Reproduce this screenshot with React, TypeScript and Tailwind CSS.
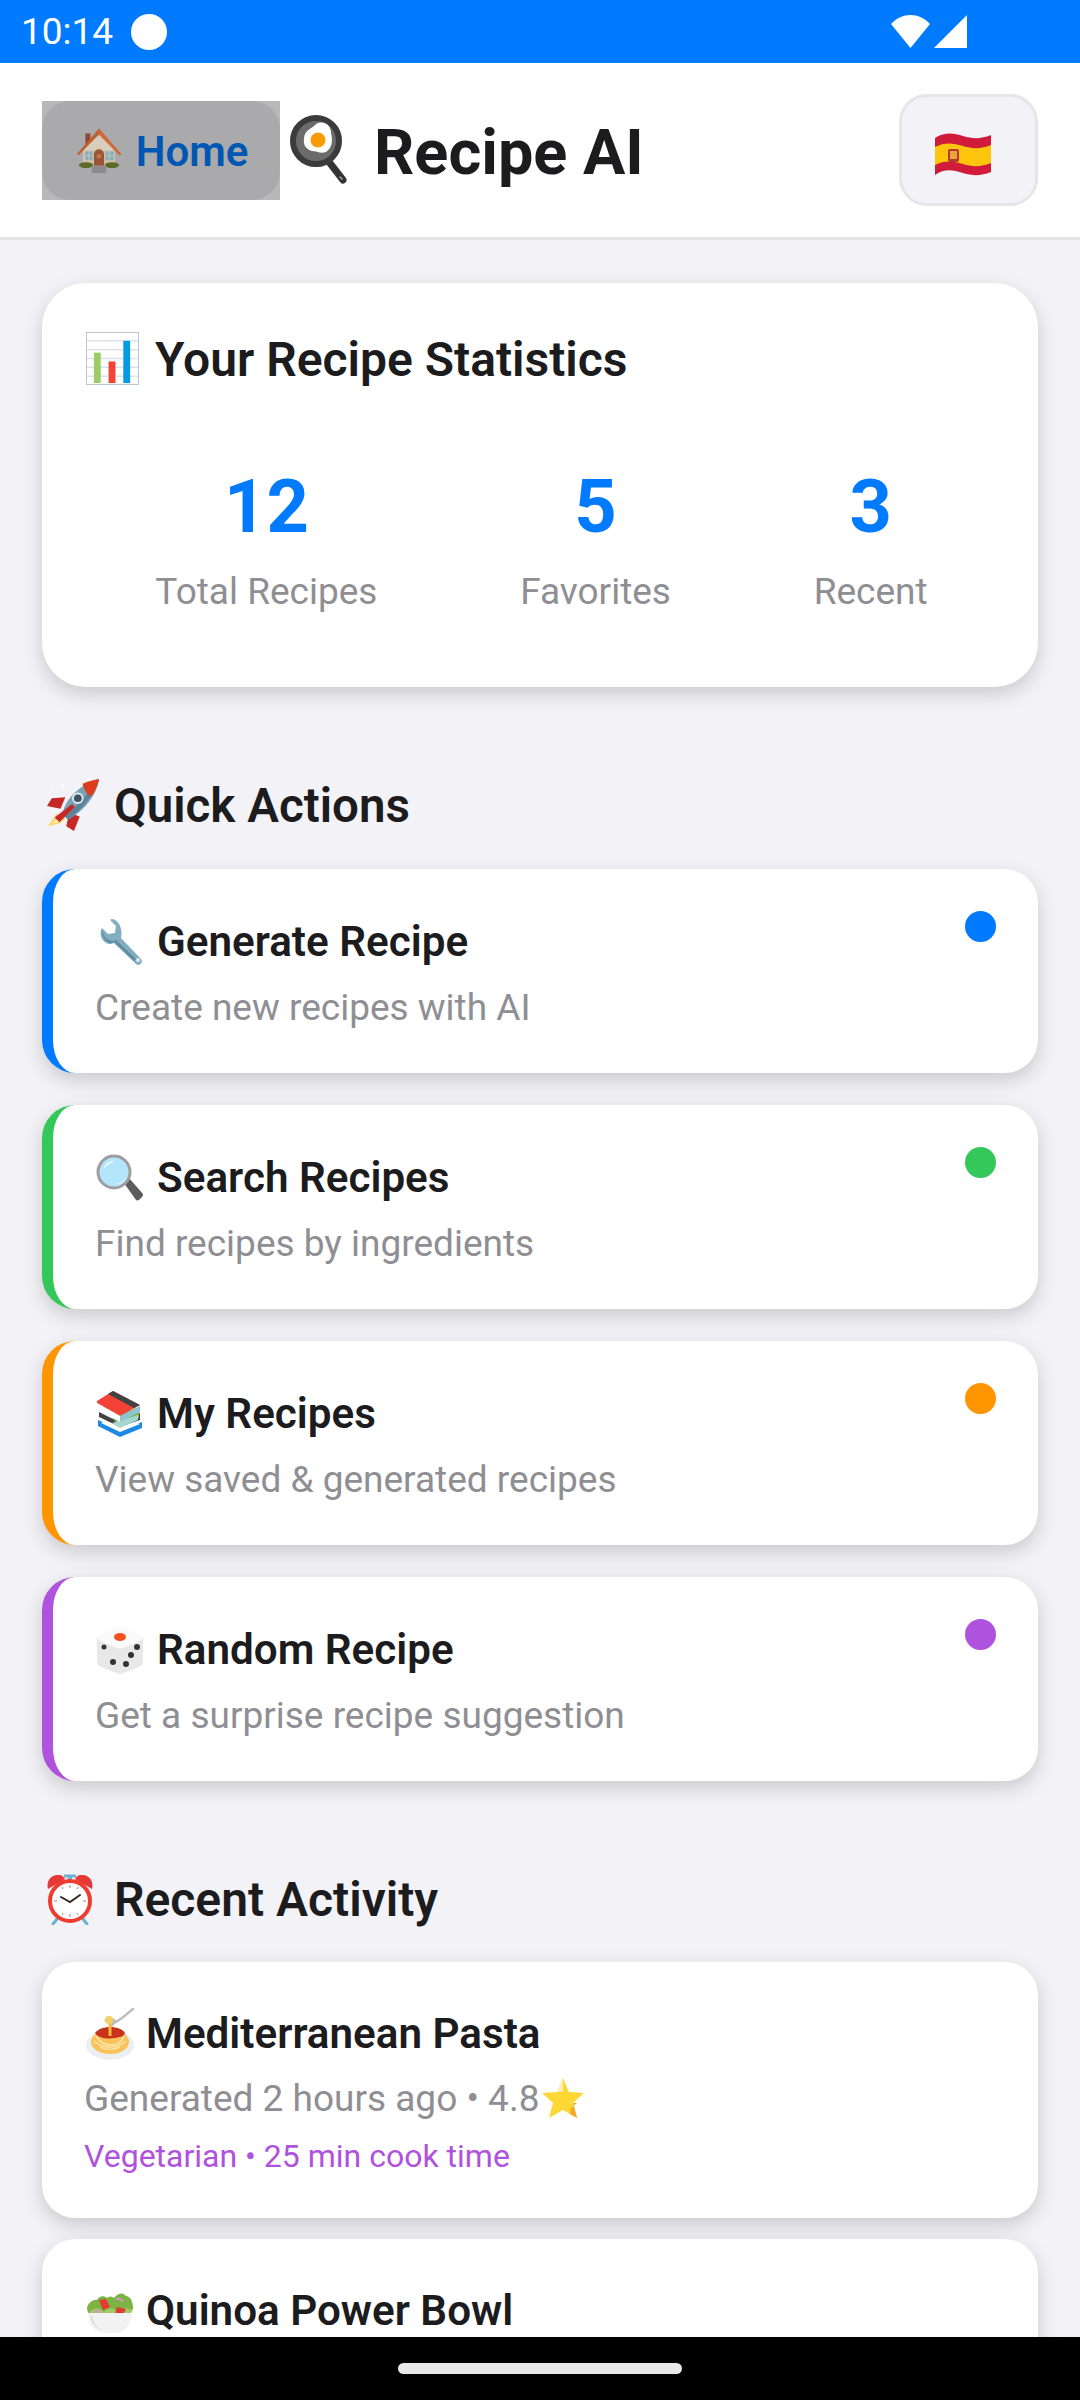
import type { ReactNode } from "react";

type IconProps = { className?: string };

function Glyph({ className, box = "0 0 64 64", children }: IconProps & { box?: string; children: ReactNode }) {
  return (
    <svg viewBox={box} className={`shrink-0 ${className ?? ""}`} aria-hidden="true">
      {children}
    </svg>
  );
}

function HouseIcon({ className }: IconProps) {
  return (
    <Glyph className={className}>
      <rect x="13" y="9" width="7" height="17" fill="#8a4b32" />
      <path d="M10 30 32 11l22 19v26H10z" fill="#d8cdbb" />
      <path d="M1 38 32 2l31 36-3 1L32 10 4 39z" fill="#bf5f30" />
      <path d="M32 2l31 36-3 1L32 10z" fill="#d06a38" />
      <rect x="11" y="33" width="43" height="21" fill="#cbbfac" />
      <path d="M25 54V38a7 7 0 0 1 14 0v16z" fill="#9a5536" />
      <rect x="29" y="38" width="6" height="5" fill="#c17a4e" />
      <rect x="13" y="34" width="10" height="12" fill="#8aaebb" />
      <rect x="41" y="34" width="11" height="12" fill="#8aaebb" />
      <path d="M18 34v12M13 40h10M46 34v12M41 40h11" stroke="#d8cdbb" strokeWidth="1" />
      <ellipse cx="14" cy="53" rx="10" ry="4" fill="#5c6b2a" />
      <ellipse cx="50" cy="53" rx="10" ry="4" fill="#5c6b2a" />
      <rect x="22" y="54" width="20" height="10" fill="#8c8c8c" />
    </Glyph>
  );
}

function PanIcon({ className }: IconProps) {
  return (
    <Glyph box="0 0 58 70" className={className}>
      <path d="M36 43l17 22" stroke="#333" strokeWidth="7" strokeLinecap="round" />
      <path d="M50 62l2 2" stroke="#aaa" strokeWidth="1.5" strokeLinecap="round" />
      <circle cx="26" cy="26" r="23" fill="#6b6b6b" stroke="#3b3b3b" strokeWidth="6" />
      <path d="M14 24c0-9 8-10 12-15 8-4 15 1 15 9 2 8 1 15-5 19-6 2-9-1-14-1-6-2-9-6-8-12z" fill="#fff" />
      <circle cx="28" cy="25" r="7.5" fill="#fb9a02" />
    </Glyph>
  );
}

function FlagIcon({ className }: IconProps) {
  return (
    <Glyph box="0 0 56 44" className={className}>
      <path d="M0 6c10-6 18-5 28-2s18 3 28-1v37c-10 4-18 4-28 1S10 36 0 43z" fill="#d01c3a" />
      <path d="M0 15c10-5 18-4 28-1s18 3 28-1v18c-10 4-18 4-28 1S10 28 0 33z" fill="#fdc50c" />
      <rect x="13" y="17" width="11" height="13" rx="2" fill="#b5392f" />
      <rect x="15" y="19" width="7" height="8" fill="#e8a33a" />
    </Glyph>
  );
}

function ChartIcon({ className }: IconProps) {
  return (
    <Glyph box="0 0 54 54" className={className}>
      <rect x="0.5" y="0.5" width="53" height="53" fill="#fff" stroke="#b8c8d4" />
      <path d="M1 9h52M1 18h52M1 27h52M1 36h52M1 45h52" stroke="#dbe4ea" strokeWidth="1.5" />
      <rect x="8" y="21" width="7" height="31" fill="#9ccc65" />
      <rect x="23" y="30" width="7" height="22" fill="#f44336" />
      <rect x="38" y="9" width="7" height="43" fill="#039be5" />
    </Glyph>
  );
}

function RocketIcon({ className }: IconProps) {
  return (
    <Glyph box="0 0 56 56" className={className}>
      <path d="M11 37 2 50l13-3 5-5z" fill="#fbd866" />
      <path d="M14 40 7 47l9-2z" fill="#fff3c4" />
      <path d="M20 20 6 21l-5 8 14 3z" fill="#c62828" />
      <path d="M24 36l-3 14 8 5 6-15z" fill="#c62828" />
      <path d="M17 38C19 24 32 8 55 1c-3 20-19 35-32 42z" fill="#78a3b8" />
      <path d="M55 1c-4 16-19 33-32 42l-3-3C32 30 44 15 55 1z" fill="#5b8498" />
      <path d="M38 6c6-3 12-4 17-5-1 6-4 13-8 18-4-1-8-7-9-13z" fill="#dd3d1c" />
      <circle cx="33" cy="21" r="6" fill="#dfe8ed" />
      <circle cx="33" cy="21" r="4" fill="#3d5364" />
      <path d="M9 41 27 27l3 3-16 16z" fill="#c62828" />
      <circle cx="17" cy="8" r="1.5" fill="#fff" />
      <circle cx="5" cy="12" r="1" fill="#fff" />
    </Glyph>
  );
}

function WrenchIcon({ className }: IconProps) {
  return (
    <Glyph box="0 0 48 48" className={className}>
      <path d="M16 1c-1 0-2 1-1 2l5 5-1 7-7 1-5-5c-1-1-2 0-2 1-2 7 3 14 10 14l3-1 22 21c3 3 8-2 5-5L25 20c2-9-2-18-9-19z" fill="#82aec0" />
      <path d="M7 12c0 7 5 11 10 11l3-1 20 19-2 2-20-19-3 1C9 25 5 18 7 12z" fill="#5f8ea3" />
      <circle cx="42" cy="42" r="2" fill="#dfeaf0" />
    </Glyph>
  );
}

function SearchIcon({ className }: IconProps) {
  return (
    <Glyph box="0 0 48 48" className={className}>
      <path d="M28 29l5-5 14 16c1 2-5 8-7 6z" fill="#5c5c5c" />
      <circle cx="18" cy="18" r="16" fill="#b3e5fc" stroke="#9e9e9e" strokeWidth="3" />
      <path d="M7 16c1-6 6-10 12-9-5 2-9 5-12 9z" fill="#e6f7ff" />
      <path d="M20 30c5-1 8-3 10-7-1 5-5 8-10 7z" fill="#e6f7ff" />
    </Glyph>
  );
}

function BooksIcon({ className }: IconProps) {
  return (
    <Glyph box="0 0 48 48" className={className}>
      <path d="M2 36 24 47l22-9v-6L24 40 2 30z" fill="#1e88e5" />
      <path d="M5 33 24 42l20-8-20-8z" fill="#fff" />
      <path d="M3 22l20 10 21-9v7L24 37 3 27z" fill="#424242" />
      <path d="M16 28l24-10 3 4v6l-19 8z" fill="#7cb342" />
      <path d="M16 33l26-8v5L24 38z" fill="#a5d6d0" />
      <path d="M1 11 17 1l27 14-20 11L1 15z" fill="#f44336" />
      <path d="M17 1l27 14-6 3L12 4z" fill="#424242" />
      <path d="M1 13l23 13 20-10v6L24 32 1 19z" fill="#8ec3d0" />
      <path d="M1 13l23 13v6L1 19z" fill="#fff" />
    </Glyph>
  );
}

function DieIcon({ className }: IconProps) {
  return (
    <Glyph box="0 0 46 48" className={className}>
      <path d="M23 1 43 9c3 2 3 4 3 7v18c0 4-1 5-4 7l-15 6c-3 1-5 1-8 0L4 41c-3-2-4-3-4-7V16c0-3 0-5 3-7z" fill="#e8e8e8" />
      <path d="M23 1 43 9c3 2 2 5 0 6L26 22c-2 1-4 1-6 0L3 15c-2-1-3-4 0-6z" fill="#fafafa" />
      <ellipse cx="23" cy="11" rx="6" ry="4" fill="#f4511e" />
      <circle cx="7" cy="21" r="2.5" fill="#333" />
      <circle cx="16" cy="36" r="3" fill="#333" />
      <circle cx="40" cy="21" r="3" fill="#333" />
      <circle cx="34" cy="29" r="3" fill="#333" />
      <circle cx="29" cy="38" r="3" fill="#333" />
    </Glyph>
  );
}

function ClockIcon({ className }: IconProps) {
  return (
    <Glyph box="0 0 48 52" className={className}>
      <path d="M11 46l-4 5M37 46l4 5" stroke="#6fb1cf" strokeWidth="3" strokeLinecap="round" />
      <path d="M24 3v6" stroke="#6fb1cf" strokeWidth="4" />
      <path d="M18 3h12" stroke="#6fb1cf" strokeWidth="3" />
      <path d="M2 16C0 8 5 1 13 2c3 0 5 2 6 4z" fill="#e53935" />
      <path d="M46 16c2-8-3-15-11-14-3 0-5 2-6 4z" fill="#e53935" />
      <circle cx="24" cy="28" r="20" fill="#fff" stroke="#ef3b30" strokeWidth="4" />
      <path d="M24 12v3M24 41v3M8 28h3M37 28h3M16 14l1 2M32 14l-1 2M16 42l1-2M32 42l-1-2" stroke="#a1887f" strokeWidth="1" />
      <path d="M15 24l9 5 10-7" fill="none" stroke="#3e2723" strokeWidth="2" strokeLinecap="round" />
    </Glyph>
  );
}

function PastaIcon({ className }: IconProps) {
  return (
    <Glyph box="0 0 48 52" className={className}>
      <path d="M25 16C33 14 38 8 47 1" stroke="#bdbdbd" strokeWidth="2.5" fill="none" strokeLinecap="round" />
      <path d="M18 12l6-4 7 5-5 6z" fill="#bdbdbd" />
      <ellipse cx="24" cy="37" rx="24" ry="15" fill="#eceff1" />
      <ellipse cx="24" cy="34" rx="19" ry="12" fill="#fbc15b" />
      <path d="M8 33c8 7 22 9 32 0M10 28c7 12 24 12 28 0M14 39c6 3 14 3 20 0" stroke="#fde5a8" strokeWidth="1.5" fill="none" />
      <path d="M9 25c3-4 9-6 15-6s13 2 15 6c-1 4-6 4-10 5-6 1-16 1-20-5z" fill="#c8321c" />
      <path d="M24 12v16" stroke="#f4bc3f" strokeWidth="3" />
      <circle cx="23" cy="12" r="4" fill="#f4d066" />
    </Glyph>
  );
}

function StarIcon({ className }: IconProps) {
  return (
    <Glyph box="0 0 44 44" className={className}>
      <path d="M22 1l6 14 15 1-11 10 4 15-14-8-14 8 4-15L1 16l15-1z" fill="#fdd835" />
      <path d="M22 1v14l-6 0z" fill="#ffecb3" />
      <path d="M32 26l4 15-7-4 1-6 6-5z" fill="#f9a825" />
    </Glyph>
  );
}

function SaladIcon({ className }: IconProps) {
  return (
    <Glyph box="0 0 48 46" className={className}>
      <path d="M1 20c1-5 6-9 10-8 2-4 7-5 10-2 3-2 5-2 7 0 4-5 9-6 12-2 4 0 7 5 7 12-1 5-5 9-9 9H10c-5 0-9-4-9-9z" fill="#7cb342" />
      <path d="M3 24c7-6 11-4 15 0 5-5 9-5 13 0 5-4 10-5 15-2l-4 8H8z" fill="#9ccc65" />
      <path d="M13 12l7-1 4 8-7 3z" fill="#e53935" />
      <path d="M31 19l9 2-4 7-7-2z" fill="#e53935" />
      <path d="M8 24c4-2 8 0 9 3M30 11c3-1 6 1 7 3" stroke="#d59ac4" strokeWidth="2" fill="none" />
      <path d="M2 25h44c0 11-7 19-15 20H17C9 44 2 36 2 25z" fill="#f2f2f2" />
      <path d="M6 28c1 7 5 12 11 14-7-1-12-7-13-14z" fill="#dcdcdc" />
    </Glyph>
  );
}

const stats = [
  { value: "12", label: "Total Recipes" },
  { value: "5", label: "Favorites" },
  { value: "3", label: "Recent" },
];

const actions = [
  {
    title: "Generate Recipe",
    desc: "Create new recipes with AI",
    icon: WrenchIcon,
    border: "border-l-[#007aff]",
    dot: "bg-[#007aff]",
  },
  {
    title: "Search Recipes",
    desc: "Find recipes by ingredients",
    icon: SearchIcon,
    border: "border-l-[#34c759]",
    dot: "bg-[#34c759]",
  },
  {
    title: "My Recipes",
    desc: "View saved & generated recipes",
    icon: BooksIcon,
    border: "border-l-[#ff9500]",
    dot: "bg-[#ff9500]",
  },
  {
    title: "Random Recipe",
    desc: "Get a surprise recipe suggestion",
    icon: DieIcon,
    border: "border-l-[#af52de]",
    dot: "bg-[#af52de]",
  },
];

const cardShadow = "shadow-[0_7px_20px_rgba(0,0,0,0.17)]";

export default function App() {
  return (
    <div className="flex h-[2400px] w-[1080px] flex-col overflow-hidden bg-[#f2f2f7] font-['Roboto',sans-serif] text-[#1c1c1e]">
      {/* status bar */}
      <div className="flex h-[63px] shrink-0 items-center justify-between bg-[#007aff] pl-[21px] pr-[113px] text-white">
        <div className="flex items-center gap-[18px]">
          <span className="text-[37px] leading-none">10:14</span>
          <span className="h-[36px] w-[36px] rounded-full bg-white" />
        </div>
        <div className="flex items-center gap-[4px]">
          <svg viewBox="0 0 39 33" className="h-[33px] w-[39px]" aria-hidden="true">
            <path d="M0 9C11-3 28-3 39 9L19.500 33z" fill="#fff" />
          </svg>
          <svg viewBox="0 0 33 33" className="h-[33px] w-[33px]" aria-hidden="true">
            <path d="M33 0v33H0z" fill="#fff" />
          </svg>
        </div>
      </div>

      {/* header */}
      <header className="flex h-[177px] shrink-0 items-center justify-between border-b-[3px] border-[#e5e5ea] bg-white px-[42px]">
        <div className="flex items-center">
          <div className="h-[99px] w-[238px] bg-[#b8b8b8]">
            <div className="flex h-full items-center justify-center gap-[14px] rounded-[28px] bg-[#aaaaac] pl-[2px]">
              <HouseIcon className="h-[46px] w-[46px]" />
              <span className="pt-[3px] text-[42px] font-semibold leading-none text-[#0056b3]">Home</span>
            </div>
          </div>
          <PanIcon className="ml-[10px] h-[70px] w-[58px]" />
          <span className="ml-[26px] pt-[5px] text-[63px] font-bold leading-none">Recipe AI</span>
        </div>
        <div className="flex h-[112px] w-[139px] items-center justify-center rounded-[28px] border-[3px] border-[#e5e5ea] bg-[#f2f2f7]">
          <FlagIcon className="mr-[11px] mt-[8px] h-[44px] w-[56px]" />
        </div>
      </header>

      <main className="min-h-0 flex-1 overflow-hidden px-[42px] pt-[43px]">
        {/* stats */}
        <section className={`h-[404px] rounded-[44px] bg-white px-[44px] pt-[44px] ${cardShadow}`}>
          <div className="flex h-[60px] items-center gap-[16px]">
            <ChartIcon className="mt-[3px] h-[53px] w-[53px]" />
            <h2 className="pt-[5px] text-[48px] font-semibold leading-none">Your Recipe Statistics</h2>
          </div>
          <div className="-ml-[2px] -mr-[5px] mt-[75px] flex justify-around">
            {stats.map((stat) => (
              <div key={stat.label} className="flex flex-col items-center">
                <span className="text-[74px] font-bold leading-[90px] text-[#007aff]">{stat.value}</span>
                <span className="mt-[15px] text-[37px] leading-[50px] text-[#8e8e93]">{stat.label}</span>
              </div>
            ))}
          </div>
        </section>

        {/* quick actions */}
        <h2 className="mt-[88px] flex h-[60px] items-center gap-[14px] pl-[4px] text-[47.500px] font-semibold leading-none">
          <RocketIcon className="h-[54px] w-[54px]" />
          <span className="pt-[3px]">Quick Actions</span>
        </h2>
        <div className="mt-[34px] flex flex-col gap-[32px]">
          {actions.map((action) => {
            const Icon = action.icon;
            return (
              <div
                key={action.title}
                className={`flex h-[204px] items-start justify-between rounded-[33px] border-l-[11px] bg-white pl-[42px] pr-[42px] ${action.border} ${cardShadow}`}
              >
                <div className="pt-[48px]">
                  <div className="flex h-[50px] items-center gap-[13px]">
                    <Icon className="ml-[1px] h-[48px] w-[48px]" />
                    <span className="text-[42.200px] font-semibold leading-none">{action.title}</span>
                  </div>
                  <p className="mt-[16px] text-[37px] leading-[50px] text-[#8e8e93]">{action.desc}</p>
                </div>
                <span className={`mt-[42px] h-[31px] w-[31px] rounded-full ${action.dot}`} />
              </div>
            );
          })}
        </div>

        {/* recent */}
        <h2 className="mt-[88px] flex h-[60px] items-center gap-[20px] pl-[4px] text-[48px] font-semibold leading-none">
          <ClockIcon className="h-[52px] w-[48px]" />
          <span className="pt-[1px]">Recent Activity</span>
        </h2>
        <div className="mt-[33px] flex flex-col gap-[21px]">
          <div className={`h-[256px] rounded-[33px] bg-white pl-[42px] pr-[42px] pt-[47px] ${cardShadow}`}>
            <div className="flex h-[50px] items-center gap-[12px] pl-[2px]">
              <PastaIcon className="h-[52px] w-[48px]" />
              <span className="text-[42.200px] font-semibold leading-none">Mediterranean Pasta</span>
            </div>
            <p className="mt-[15px] flex h-[50px] items-center text-[37px] leading-[50px] text-[#8e8e93]">
              Generated 2 hours ago • 4.8
              <StarIcon className="ml-[2px] h-[44px] w-[44px]" />
            </p>
            <p className="mt-[12px] text-[32px] leading-[40px] text-[#af52de]">Vegetarian • 25 min cook time</p>
          </div>
          <div className={`h-[256px] rounded-[33px] bg-white pl-[42px] pr-[42px] pt-[47px] ${cardShadow}`}>
            <div className="flex h-[50px] items-center gap-[12px] pl-[2px]">
              <SaladIcon className="h-[46px] w-[48px]" />
              <span className="text-[42.200px] font-semibold leading-none">Quinoa Power Bowl</span>
            </div>
          </div>
        </div>
      </main>

      {/* nav pill */}
      <div className="flex h-[63px] shrink-0 items-start justify-center bg-black pt-[26px]">
        <div className="h-[11px] w-[284px] rounded-full bg-[#e8e8e8]" />
      </div>
    </div>
  );
}
